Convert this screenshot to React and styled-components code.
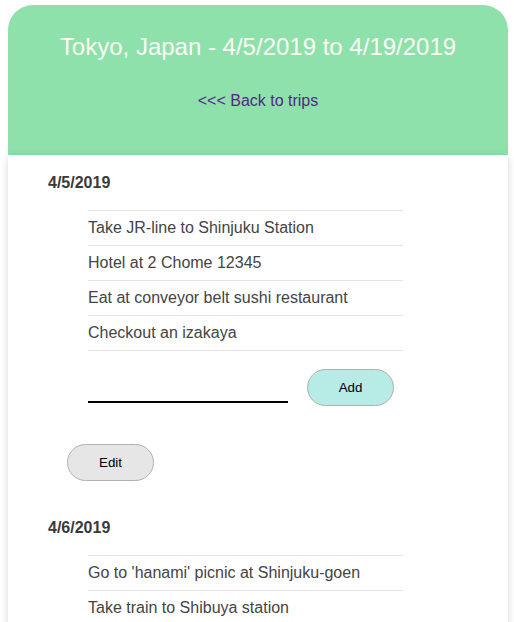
import React from "react";
import styled, { createGlobalStyle } from "styled-components";

const GlobalStyle = createGlobalStyle`
  body {
    margin: 0;
    background: #fff;
    font-family: "Liberation Sans", Arial, sans-serif;
  }
`;

const Page = styled.div`
  padding: 5px 0 0 8px;
`;

const Card = styled.div`
  width: 500px;
`;

const Header = styled.header`
  box-sizing: border-box;
  height: 150px;
  padding-top: 28px;
  background: #8fe1ab;
  border-radius: 25px 25px 0 0;
  text-align: center;
`;

const Title = styled.h1`
  margin: 0;
  font-size: 24px;
  line-height: 28px;
  font-weight: normal;
  color: #fbfbf5;
`;

const BackLink = styled.a`
  display: inline-block;
  margin-top: 31px;
  font-size: 16px;
  line-height: 18px;
  color: #4e2a84;
  text-decoration: none;
`;

const Body = styled.main`
  background: #fff;
  box-shadow: 0 2px 8px rgba(0, 0, 0, 0.16);
  padding: 19px 0 20px 40px;
  min-height: 500px;
`;

const Day = styled.section`
  & + & {
    margin-top: 38px;
  }
`;

const DayDate = styled.h3`
  margin: 0;
  font-size: 16px;
  line-height: 18px;
  font-weight: bold;
  color: #3a3a3a;
`;

const List = styled.ul`
  list-style: none;
  margin: 18px 0 0 40px;
  padding: 0;
  width: 315px;
  border-bottom: 1px solid #e4e4e4;
`;

const Item = styled.li`
  box-sizing: border-box;
  height: 35px;
  border-top: 1px solid #e4e4e4;
  display: flex;
  align-items: center;
  font-size: 16px;
  color: #444;
`;

const AddRow = styled.div`
  display: flex;
  align-items: flex-end;
  gap: 19px;
  margin: 18px 0 0 40px;
`;

const Input = styled.input`
  box-sizing: border-box;
  width: 200px;
  height: 28px;
  margin-bottom: 3px;
  border: none;
  border-bottom: 2px solid #000;
  outline: none;
  background: transparent;
  font-family: inherit;
  font-size: 16px;
`;

const PillButton = styled.button`
  box-sizing: border-box;
  width: 87px;
  height: 37px;
  border: 1px solid #b0b0b0;
  border-radius: 19px;
  background: ${(p) => (p.$tone === "add" ? "#b6ebe6" : "#e6e6e6")};
  font-family: "Liberation Sans", Arial, sans-serif;
  font-size: 13.33px;
  color: #000;
`;

const EditWrap = styled.div`
  margin: 38px 0 0 19px;
`;

const days = [
  {
    date: "4/5/2019",
    items: [
      "Take JR-line to Shinjuku Station",
      "Hotel at 2 Chome 12345",
      "Eat at conveyor belt sushi restaurant",
      "Checkout an izakaya",
    ],
  },
  {
    date: "4/6/2019",
    items: [
      "Go to 'hanami' picnic at Shinjuku-goen",
      "Take train to Shibuya station",
    ],
  },
];

export default function App() {
  return (
    <Page>
      <GlobalStyle />
      <Card>
        <Header>
          <Title>Tokyo, Japan - 4/5/2019 to 4/19/2019</Title>
          <BackLink href="#">&lt;&lt;&lt; Back to trips</BackLink>
        </Header>
        <Body>
          {days.map((day) => (
            <Day key={day.date}>
              <DayDate>{day.date}</DayDate>
              <List>
                {day.items.map((item) => (
                  <Item key={item}>{item}</Item>
                ))}
              </List>
              <AddRow>
                <Input />
                <PillButton $tone="add">Add</PillButton>
              </AddRow>
              <EditWrap>
                <PillButton>Edit</PillButton>
              </EditWrap>
            </Day>
          ))}
        </Body>
      </Card>
    </Page>
  );
}
